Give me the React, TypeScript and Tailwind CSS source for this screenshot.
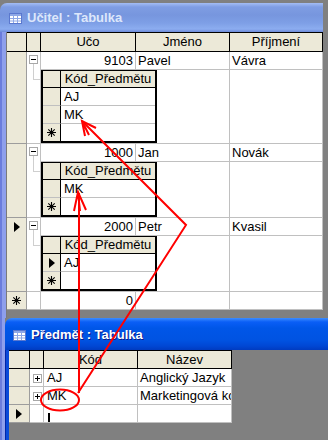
import React from 'react'

type Teacher = { id: string; name: string; surname: string; subjects: string[]; current?: boolean }

const teachers: Teacher[] = [
  { id: '9103', name: 'Pavel', surname: 'Vávra', subjects: ['AJ', 'MK'] },
  { id: '1000', name: 'Jan', surname: 'Novák', subjects: ['MK'] },
  { id: '2000', name: 'Petr', surname: 'Kvasil', subjects: ['AJ'], current: true },
]

const subjects = [
  ['AJ', 'Anglický Jazyk'],
  ['MK', 'Marketingová komunikace'],
]

function TableIcon() {
  return (
    <svg width="13" height="11" viewBox="0 0 13 11" className="shrink-0">
      <rect x="0.5" y="0.5" width="12" height="10" fill="#ffffff" stroke="#5a78cf" />
      <rect x="1" y="1" width="11" height="2" fill="#8ea8e6" />
      <path d="M1 5.5h11M1 8h11M4.5 3v7M8.5 3v7" stroke="#8ea8e6" />
    </svg>
  )
}

function Pointer() {
  return (
    <svg width="6" height="10" viewBox="0 0 6 10" className="block">
      <path d="M0 0L6 5L0 10Z" fill="#000" />
    </svg>
  )
}

function NewMark() {
  return (
    <svg width="9" height="9" viewBox="0 0 9 9" className="block">
      <path d="M4.5 0v9M0 4.5h9M1.3 1.3l6.4 6.4M7.7 1.3l-6.4 6.4" stroke="#000" strokeWidth="1.1" />
    </svg>
  )
}

function ExpandBox({ plus, className }: { plus?: boolean; className: string }) {
  return (
    <div className={`relative flex h-[9px] w-[9px] items-center justify-center border border-[#a8a8a8] bg-white ${className}`}>
      <div className="h-px w-[5px] bg-black" />
      {plus && <div className="absolute left-[3px] top-[1px] h-[5px] w-px bg-black" />}
    </div>
  )
}

function Td({ className = '', children }: { className?: string; children?: React.ReactNode }) {
  return (
    <div className={`shrink-0 overflow-hidden whitespace-nowrap border-b border-r border-[#c0c0c0] bg-white px-[2px] leading-[17px] ${className}`}>
      {children}
    </div>
  )
}

function Th({ className = '', children }: { className?: string; children?: React.ReactNode }) {
  return <div className={`shrink-0 border-b border-r border-black bg-[#ece9d8] text-center leading-[18px] ${className}`}>{children}</div>
}

function SubGrid({ rows, current }: { rows: string[]; current?: boolean }) {
  return (
    <div className="flex w-[116px] shrink-0 flex-col border-x-2 border-b-2 border-t border-black">
      <div className="flex h-[17px]">
        <div className="w-[18px] shrink-0 border-b border-r border-black bg-[#ece9d8]" />
        <div className="flex-1 border-b border-black bg-[#ece9d8] text-center leading-[16px]">Kód_Předmětu</div>
      </div>
      {rows.map((code, i) => (
        <div key={code} className="flex h-[18px]">
          <div className="flex w-[18px] shrink-0 items-center justify-center border-b border-r border-b-[#c0c0c0] border-r-black bg-[#ece9d8]">
            {current && i === 0 && <Pointer />}
          </div>
          <div className="flex-1 border-b border-[#c0c0c0] bg-white pl-[3px] leading-[17px]">{code}</div>
        </div>
      ))}
      <div className="flex h-[17px]">
        <div className="flex w-[18px] shrink-0 items-center justify-center border-r border-black bg-[#ece9d8]">
          <NewMark />
        </div>
        <div className="flex-1 bg-white" />
      </div>
    </div>
  )
}

function Record({ t }: { t: Teacher }) {
  return (
    <div className="flex">
      <div className="flex w-[20px] shrink-0 justify-center border-b border-r border-[#9d9d9d] bg-[#ece9d8] pt-[4px]">
        {t.current && <Pointer />}
      </div>
      <div className="w-[14px] shrink-0 border-b border-r border-[#c0c0c0] bg-white">
        <ExpandBox className="ml-[2px] mt-[3px]" />
        <div className="ml-[6px] h-[16px] w-[7px] border-b border-l border-[#cfcfcf]" />
      </div>
      <div className="flex w-[282px] flex-col">
        <div className="flex h-[18px]">
          <Td className="w-[95px] text-right">{t.id}</Td>
          <Td className="w-[94px]">{t.name}</Td>
          <Td className="w-[93px]">{t.surname}</Td>
        </div>
        <div className="flex border-b border-[#c0c0c0]">
          <SubGrid rows={t.subjects} current={t.current} />
          <div className="w-[73px] border-r border-[#c0c0c0] bg-white" />
          <div className="w-[93px] border-r border-[#c0c0c0] bg-white" />
        </div>
      </div>
    </div>
  )
}

export default function App() {
  return (
    <div className="relative flex h-[440px] w-[328px] flex-col overflow-hidden bg-[#808080] pt-[3px] font-['Liberation_Sans',Arial,sans-serif] text-[13px] text-black">
      {/* Učitel window */}
      <div className="flex w-[323px] shrink-0 flex-col">
        <div className="flex h-[29px] items-start gap-[5px] rounded-tl-[7px] bg-[linear-gradient(to_bottom,#a4bdf4_0px,#7f9de3_4px,#7796de_12px,#7e9fe6_20px,#8cadf0_26px,#6d8ad8_29px)] pl-[9px] pt-[10px]">
          <TableIcon />
          <span className="-mt-[3px] text-[13px] font-bold leading-[16px] text-[#dde7fb]">Učitel : Tabulka</span>
        </div>
        <div className="flex">
          <div className="w-[7px] shrink-0 border-l-2 border-r border-l-[#6a7cdc] border-r-[#7a7a7a] bg-[#8e9fec]" />
          <div className="flex w-[316px] flex-col">
            <div className="flex h-[20px] border-t border-black">
              <Th className="w-[20px]" />
              <Th className="w-[14px]" />
              <Th className="w-[95px]">Učo</Th>
              <Th className="w-[94px]">Jméno</Th>
              <Th className="w-[93px]">Příjmení</Th>
            </div>
            {teachers.map((t) => (
              <Record key={t.id} t={t} />
            ))}
            <div className="flex h-[18px]">
              <div className="flex w-[20px] shrink-0 items-center justify-center border-b border-r border-[#9d9d9d] bg-[#ece9d8]">
                <NewMark />
              </div>
              <div className="w-[14px] shrink-0 border-b border-r border-[#c0c0c0] bg-white" />
              <Td className="w-[95px] text-right">0</Td>
              <Td className="w-[94px]" />
              <Td className="w-[93px]" />
            </div>
            <div className="h-[8px]" />
          </div>
        </div>
      </div>

      {/* Předmět window */}
      <div className="flex flex-1">
        <div className="w-[5px] shrink-0 border-l-2 border-l-[#6a7cdc] bg-[#8e9fec]" />
        <div className="flex flex-1 flex-col">
          <div className="flex h-[32px] items-start gap-[5px] rounded-tl-[7px] bg-[linear-gradient(to_bottom,#3d8dff_0px,#0a5ef6_4px,#0056e8_10px,#0053e2_22px,#0047d4_28px,#003bc0_32px)] pl-[8px] pt-[12px]">
            <TableIcon />
            <span className="-mt-[3px] text-[13px] font-bold leading-[16px] text-white [text-shadow:1px_1px_#0a1a8a]">Předmět : Tabulka</span>
          </div>
          <div className="flex flex-1">
            <div className="w-[4px] shrink-0 border-l border-l-[#0026a8] bg-[#0a4ad8]" />
            <div className="flex flex-col">
              <div className="flex h-[19px] border-t border-black">
                <Th className="w-[21px]" />
                <Th className="w-[14px]" />
                <Th className="w-[94px]">Kód</Th>
                <Th className="w-[94px]">Název</Th>
              </div>
              {subjects.map(([code, name]) => (
                <div key={code} className="flex h-[18px]">
                  <div className="w-[21px] shrink-0 border-b border-r border-[#9d9d9d] bg-[#ece9d8]" />
                  <div className="w-[14px] shrink-0 border-b border-r border-[#c0c0c0] bg-white">
                    <ExpandBox plus className="ml-[3px] mt-[5px]" />
                  </div>
                  <Td className="w-[94px] pl-[3px]">{code}</Td>
                  <Td className="w-[94px]">{name}</Td>
                </div>
              ))}
              <div className="flex h-[18px]">
                <div className="flex w-[21px] shrink-0 items-center justify-center border-b border-r border-[#9d9d9d] bg-[#ece9d8]">
                  <Pointer />
                </div>
                <div className="w-[14px] shrink-0 border-b border-r border-[#c0c0c0] bg-white" />
                <Td className="w-[94px] pl-[3px]">
                  <div className="ml-px mt-[8px] h-[9px] w-[2px] bg-black" />
                </Td>
                <Td className="w-[94px]" />
              </div>
            </div>
          </div>
        </div>
      </div>

      {/* red annotations drawn over the screenshot */}
      <svg className="pointer-events-none absolute left-0 top-0" width="328" height="440" viewBox="0 0 328 440" fill="none" stroke="#ff0000" strokeWidth="2">
        <path d="M82 121L186 225L78 393" />
        <path d="M79 393V193" />
        <path d="M85 136L82 121L96 128M89 135L82 121" />
        <path d="M74 211L78 192L86 210M80 211L78 192" />
        <ellipse cx="60" cy="400" rx="19" ry="10.5" />
      </svg>
    </div>
  )
}
